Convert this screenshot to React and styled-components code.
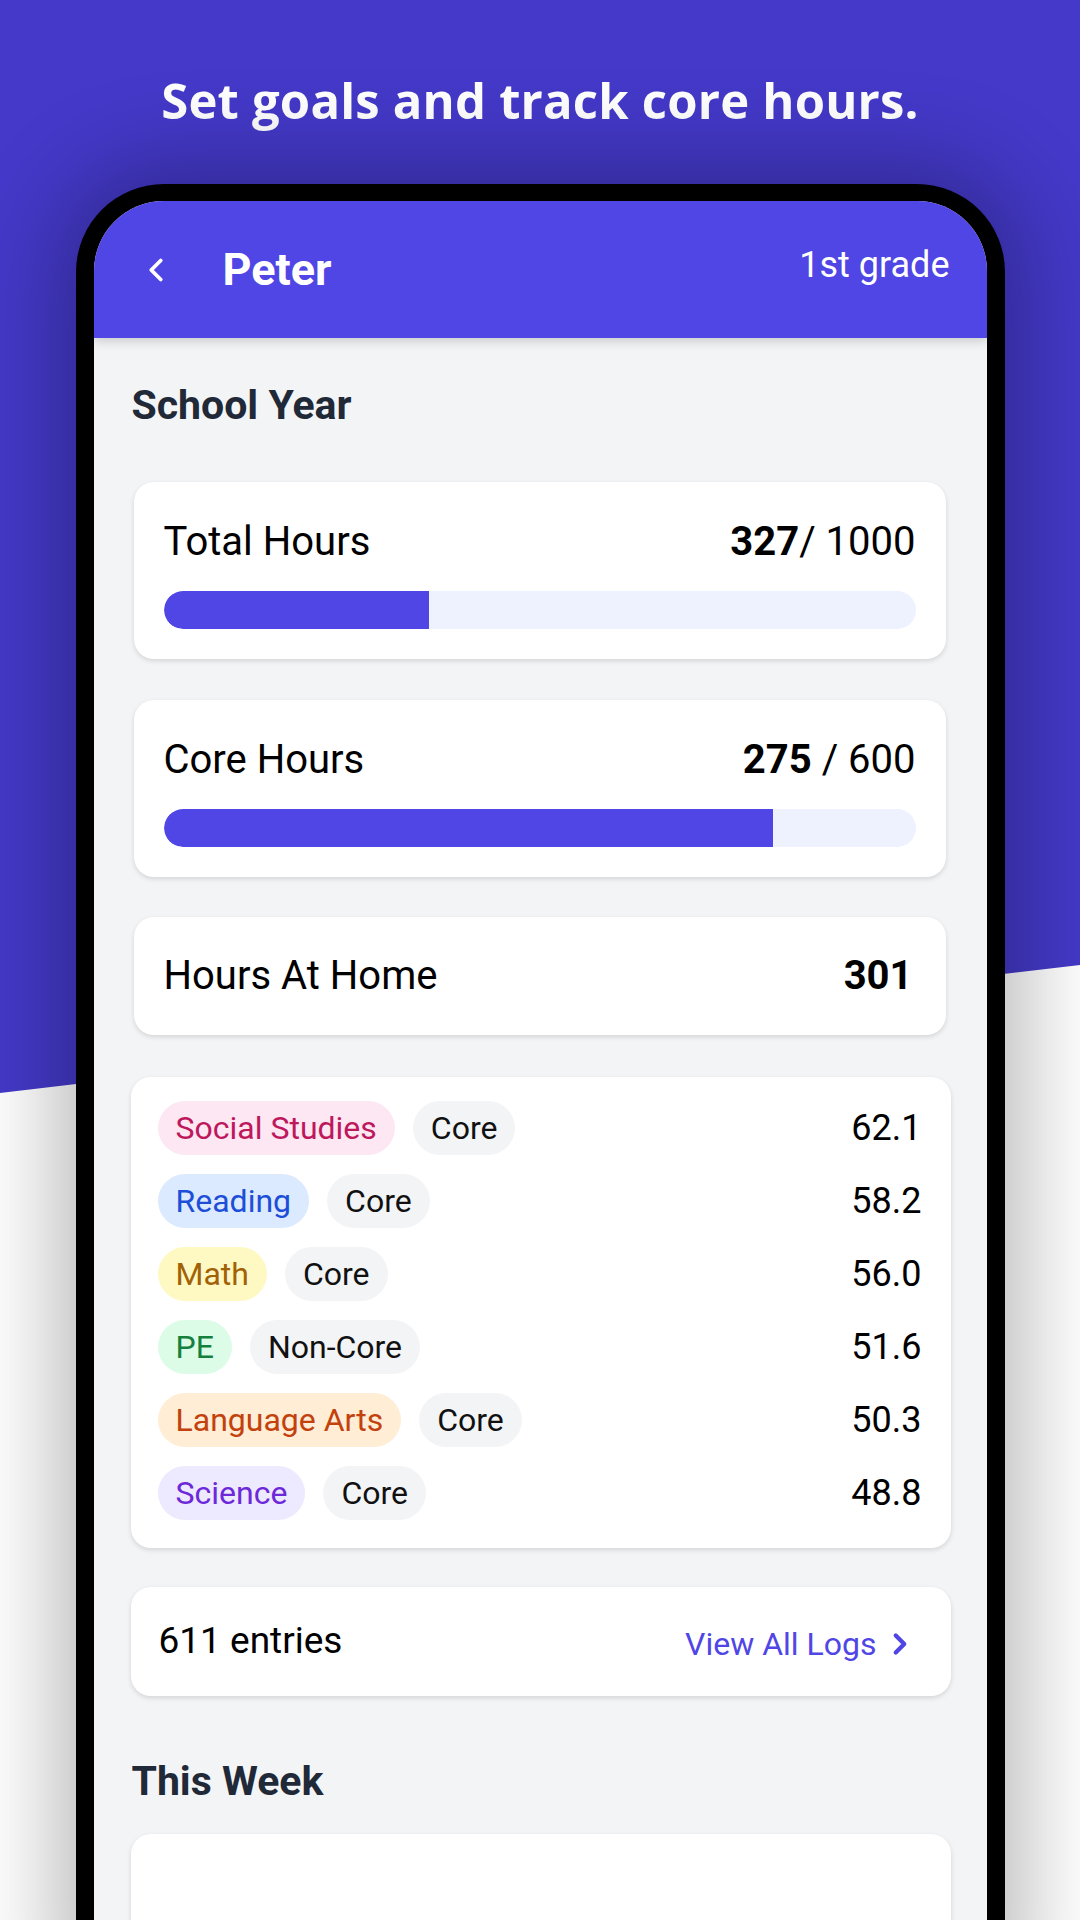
import React from 'react'
import styled, { createGlobalStyle } from 'styled-components'
import { ChevronLeft, ChevronRight } from 'lucide-react'

const GlobalStyle = createGlobalStyle`
  html, body {
    margin: 0;
    padding: 0;
    background: #ffffff;
  }
  * {
    box-sizing: border-box;
  }
`

const subjects = [
  { name: 'Social Studies', kind: 'Core', hours: '62.1', bg: '#fce7f3', fg: '#be185d' },
  { name: 'Reading', kind: 'Core', hours: '58.2', bg: '#dbeafe', fg: '#1d4ed8' },
  { name: 'Math', kind: 'Core', hours: '56.0', bg: '#fef9c3', fg: '#a16207' },
  { name: 'PE', kind: 'Non-Core', hours: '51.6', bg: '#dcfce7', fg: '#15803d' },
  { name: 'Language Arts', kind: 'Core', hours: '50.3', bg: '#ffedd5', fg: '#c2410c' },
  { name: 'Science', kind: 'Core', hours: '48.8', bg: '#ede9fe', fg: '#6d28d9' },
]

const App = () => {
  return (
    <Page>
      <GlobalStyle />
      <Backdrop />
      <Headline>Set goals and track core hours.</Headline>

      <Phone>
        <Screen>
          <Header>
            <BackButton>
              <ChevronLeft size={38} strokeWidth={2.4} />
            </BackButton>
            <Name>Peter</Name>
            <Grade>1st grade</Grade>
          </Header>

          <Content>
            <SectionTitle>School Year</SectionTitle>

            <Card>
              <StatRow>
                <Label>Total Hours</Label>
                <Value><b>327</b>/ 1000</Value>
              </StatRow>
              <Track>
                <Fill style={{ width: '35.3%' }} />
              </Track>
            </Card>

            <Card $gap={41}>
              <StatRow>
                <Label>Core Hours</Label>
                <Value><b>275</b> / 600</Value>
              </StatRow>
              <Track>
                <Fill style={{ width: '81.1%' }} />
              </Track>
            </Card>

            <Card $gap={40} $flat>
              <StatRow>
                <Label>Hours At Home</Label>
                <Value $pad={3}><b>301</b></Value>
              </StatRow>
            </Card>

            <ListCard>
              {subjects.map((s) => (
                <SubjectRow key={s.name}>
                  <Chip $bg={s.bg} $fg={s.fg}>{s.name}</Chip>
                  <Chip>{s.kind}</Chip>
                  <Hours>{s.hours}</Hours>
                </SubjectRow>
              ))}
            </ListCard>

            <LogsCard>
              <Entries>611 entries</Entries>
              <LogsLink>
                View All Logs
                <ChevronRight size={34} strokeWidth={3} />
              </LogsLink>
            </LogsCard>

            <SectionTitle $top={63}>This Week</SectionTitle>
            <WeekCard />
          </Content>
        </Screen>
      </Phone>
    </Page>
  )
}

export default App

const Page = styled.div`
  position: relative;
  width: 1080px;
  height: 1920px;
  overflow: hidden;
  background: #ffffff;
  display: flex;
  flex-direction: column;
  align-items: center;
`

// purple slanted background behind everything
const Backdrop = styled.div`
  position: absolute;
  inset: 0;
  background: #4439c9;
  clip-path: polygon(0 0, 100% 0, 100% 965px, 0 1093px);
`

const Headline = styled.h1`
  position: relative;
  margin: 70px 0 0 0;
  color: #ffffff;
  font-family: 'Open Sans', 'Liberation Sans', sans-serif;
  font-weight: 700;
  font-size: 49px;
  line-height: 60px;
  letter-spacing: 0.2px;
  white-space: nowrap;
`

const Phone = styled.div`
  position: relative;
  margin-top: 54px;
  width: 929px;
  height: 1800px;
  flex-shrink: 0;
  background: #000000;
  border: 18px solid #000000;
  border-top-width: 17px;
  border-bottom: none;
  border-radius: 88px 88px 0 0;
  box-shadow: 0 0 90px 20px rgba(0, 0, 0, 0.28);
`

const Screen = styled.div`
  width: 100%;
  height: 100%;
  background: #f3f4f6;
  border-radius: 70px 70px 0 0;
  overflow: hidden;
  font-family: Roboto, 'Liberation Sans', sans-serif;
`

const Header = styled.div`
  position: relative;
  z-index: 1;
  height: 137px;
  padding: 0 37px 0 43px;
  display: flex;
  align-items: center;
  background: #4f46e5;
  color: #ffffff;
  box-shadow: 0 3px 10px rgba(0, 0, 0, 0.18);
`

const BackButton = styled.button`
  display: flex;
  align-items: center;
  padding: 0;
  border: none;
  background: none;
  color: #ffffff;
  cursor: pointer;
`

const Name = styled.div`
  margin-left: 48px;
  font-size: 45px;
  font-weight: 700;
  line-height: 52px;
`

const Grade = styled.div`
  margin-left: auto;
  margin-bottom: 10px;
  font-size: 36px;
  font-weight: 400;
  line-height: 44px;
`

const Content = styled.div`
  display: flex;
  flex-direction: column;
`

const SectionTitle = styled.h2`
  margin: ${(p) => p.$top || 45}px 0 0 38px;
  color: #1f2937;
  font-size: 41px;
  font-weight: 700;
  line-height: 44px;
`

const Card = styled.div`
  margin: ${(p) => p.$gap || 55}px 41px 0 40px;
  padding: ${(p) => (p.$flat ? '36px 30px' : '37px 30px 30px')};
  background: #ffffff;
  border-radius: 20px;
  box-shadow: 0 2px 5px rgba(0, 0, 0, 0.13);
`

const StatRow = styled.div`
  display: flex;
  align-items: center;
  justify-content: space-between;
  color: #000000;
`

const Label = styled.span`
  font-size: 40px;
  line-height: 46px;
`

const Value = styled.span`
  padding-right: ${(p) => p.$pad || 0}px;
  font-size: 40px;
  line-height: 46px;

  b {
    font-weight: 700;
  }
`

const Track = styled.div`
  margin-top: 26px;
  height: 38px;
  border-radius: 19px;
  background: #eef2ff;
  overflow: hidden;
`

const Fill = styled.div`
  height: 100%;
  background: #4f46e5;
  border-radius: 19px 0 0 19px;
`

const ListCard = styled.div`
  margin: 42px 36px 0 37px;
  padding: 24px 29px 28px 27px;
  display: flex;
  flex-direction: column;
  gap: 19px;
  background: #ffffff;
  border-radius: 20px;
  box-shadow: 0 2px 5px rgba(0, 0, 0, 0.13);
`

const SubjectRow = styled.div`
  display: flex;
  align-items: center;
  gap: 18px;
`

const Chip = styled.span`
  height: 54px;
  padding: 0 18px;
  display: inline-flex;
  align-items: center;
  border-radius: 27px;
  background: ${(p) => p.$bg || '#f3f4f6'};
  color: ${(p) => p.$fg || '#111111'};
  font-size: 32px;
`

const Hours = styled.span`
  margin-left: auto;
  color: #000000;
  font-size: 36px;
`

const LogsCard = styled.div`
  margin: 39px 36px 0 37px;
  padding: 31px 34px 32px 28px;
  display: flex;
  align-items: center;
  justify-content: space-between;
  background: #ffffff;
  border-radius: 20px;
  box-shadow: 0 2px 5px rgba(0, 0, 0, 0.13);
`

const Entries = styled.span`
  color: #000000;
  font-size: 37px;
  line-height: 44px;
`

const LogsLink = styled.a`
  display: flex;
  align-items: center;
  gap: 6px;
  margin-top: 6px;
  color: #5046e5;
  font-size: 32px;
  line-height: 40px;
  cursor: pointer;
`

const WeekCard = styled.div`
  margin: 31px 36px 0 37px;
  height: 240px;
  background: #ffffff;
  border-radius: 20px;
  box-shadow: 0 2px 5px rgba(0, 0, 0, 0.13);
`
